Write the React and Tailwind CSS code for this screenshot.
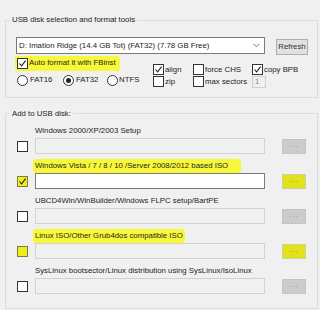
import React from "react";

function Check() {
  return (
    <svg width="9" height="9" viewBox="0 0 9 9" className="block">
      <path d="M1.5 4.5 L3.6 6.8 L7.6 1.6" fill="none" stroke="#222" strokeWidth="1.1" />
    </svg>
  );
}

function Box({ checked, yellow }) {
  return (
    <span
      className={
        "w-[11px] h-[11px] shrink-0 border flex items-center justify-center " +
        (yellow ? "bg-[#eeee1a] border-[#7a7a55]" : "bg-white border-[#333333]")
      }
    >
      {checked ? <Check /> : null}
    </span>
  );
}

function Radio({ on }) {
  return (
    <span className="w-[11px] h-[11px] shrink-0 rounded-full border border-[#333333] bg-white flex items-center justify-center">
      {on ? <span className="w-[5px] h-[5px] rounded-full bg-[#222222]" /> : null}
    </span>
  );
}

function Row({ label, checked, enabled, hl, hlPad, boxYellow, btnYellow }) {
  return (
    <div className="mb-[5px]">
      <div className="h-[14px] flex items-center">
        <span
          className={
            "ml-[27px] pl-[2px] leading-[14px] w-fit " +
            (hl ? "bg-[#f8f83a] rounded-[3px] " + hlPad : "")
          }
        >
          {label}
        </span>
      </div>
      <div className="ml-[11px] h-[16px] flex items-center">
        <Box checked={checked} yellow={boxYellow} />
        <div
          className={
            "ml-[7px] w-[230px] h-[16px] border " +
            (enabled ? "bg-white border-[#7a7a7a]" : "bg-[#f0f0f0] border-[#d2d2d2]")
          }
        />
        <div
          className={
            "ml-[17px] w-[24px] h-[15px] border flex items-center justify-center leading-none text-[8px] " +
            (btnYellow
              ? "bg-[#e2e21c] border-[#d0d0a0] text-[#8a8a40]"
              : "bg-[#cccccc] border-[#c4c4c4] text-[#8e8e8e]")
          }
        >
          <span className="tracking-[1px] -mt-[3px]">...</span>
        </div>
      </div>
    </div>
  );
}

export default function App() {
  return (
    <div className="w-[320px] h-[310px] bg-[#f0f0f0] overflow-hidden pt-[20px] font-['Liberation_Sans',Arial,sans-serif] text-[7.8px] text-[#1c1c1c]">
      {/* Group 1 */}
      <div className="ml-[5px] w-[313px] h-[78px] border border-[#dcdcdc]">
        <div className="-mt-[8px] ml-[4px] w-fit px-[2px] bg-[#f0f0f0] leading-[14px]">
          USB disk selection and format tools
        </div>
        <div className="mt-[10px] ml-[10px] flex items-start">
          <div className="w-[249px] h-[17px] border border-[#7a7a7a] bg-white flex items-center pl-[2px] pr-[4px]">
            <span className="flex-1 leading-none whitespace-nowrap">
              D: Imation Ridge (14.4 GB Tot) (FAT32) (7.78 GB Free)
            </span>
            <svg width="7" height="5" viewBox="0 0 7 5" className="block">
              <path d="M0.5 0.8 L3.5 3.8 L6.5 0.8" fill="none" stroke="#6a6a6a" strokeWidth="0.9" />
            </svg>
          </div>
          <div className="ml-[11px] mt-[2px] w-[32px] h-[16px] border border-[#adadad] bg-[#e1e1e1] flex items-center justify-center leading-none text-[#333333]">
            Refresh
          </div>
        </div>
        <div className="flex">
          <div className="ml-[11px] w-[136px]">
            <div className="h-[16px] flex items-center">
              <div className="-ml-[2px] pl-[2px] pr-[4px] h-[15px] bg-[#f8f83a] rounded-[3px] flex items-center">
                <Box checked />
                <span className="ml-[1px] leading-none">Auto format it with FBinst</span>
              </div>
            </div>
            <div className="mt-[1px] h-[16px] flex items-center">
              <div className="w-[46px] flex items-center">
                <Radio />
                <span className="ml-[2px] leading-none">FAT16</span>
              </div>
              <div className="w-[44px] flex items-center">
                <Radio on />
                <span className="ml-[2px] leading-none">FAT32</span>
              </div>
              <div className="flex items-center">
                <Radio />
                <span className="ml-[1px] leading-none">NTFS</span>
              </div>
            </div>
          </div>
          <div className="mt-[9px] grid grid-cols-[40px_59px_60px] grid-rows-[11px_11px] gap-y-[1px]">
            <div className="flex items-center">
              <Box checked />
              <span className="ml-[1px] leading-none">align</span>
            </div>
            <div className="flex items-center">
              <Box />
              <span className="ml-[1px] leading-none">force CHS</span>
            </div>
            <div className="flex items-center">
              <Box checked />
              <span className="ml-[1px] leading-none">copy BPB</span>
            </div>
            <div className="flex items-center">
              <Box />
              <span className="ml-[1px] leading-none">zip</span>
            </div>
            <div className="flex items-center">
              <Box />
              <span className="ml-[1px] leading-none">max sectors</span>
            </div>
            <div className="flex items-center">
              <div className="w-[14px] h-[12px] border border-[#cfcfcf] bg-[#f0f0f0] flex items-center pl-[2px] leading-none text-[#8a8a8a]">
                1
              </div>
            </div>
          </div>
        </div>
      </div>

      {/* Group 2 */}
      <div className="mt-[15px] ml-[5px] w-[313px] h-[196px] border border-[#dcdcdc]">
        <div className="-mt-[7px] ml-[4px] w-fit px-[2px] bg-[#f0f0f0] leading-[14px]">
          Add to USB disk:
        </div>
        <div className="mt-[3px]">
          <Row label="Windows 2000/XP/2003 Setup" />
          <Row
            label="Windows Vista / 7 / 8 / 10 /Server 2008/2012 based ISO"
            checked
            enabled
            hl
            hlPad="pr-[13px]"
            boxYellow
            btnYellow
          />
          <Row label="UBCD4Win/WinBuilder/Windows FLPC setup/BartPE" />
          <Row
            label="Linux ISO/Other Grub4dos compatible ISO"
            hl
            hlPad="pr-[2px]"
            boxYellow
            btnYellow
          />
          <Row label="SysLinux bootsector/Linux distribution using SysLinux/IsoLinux" />
        </div>
      </div>
    </div>
  );
}
